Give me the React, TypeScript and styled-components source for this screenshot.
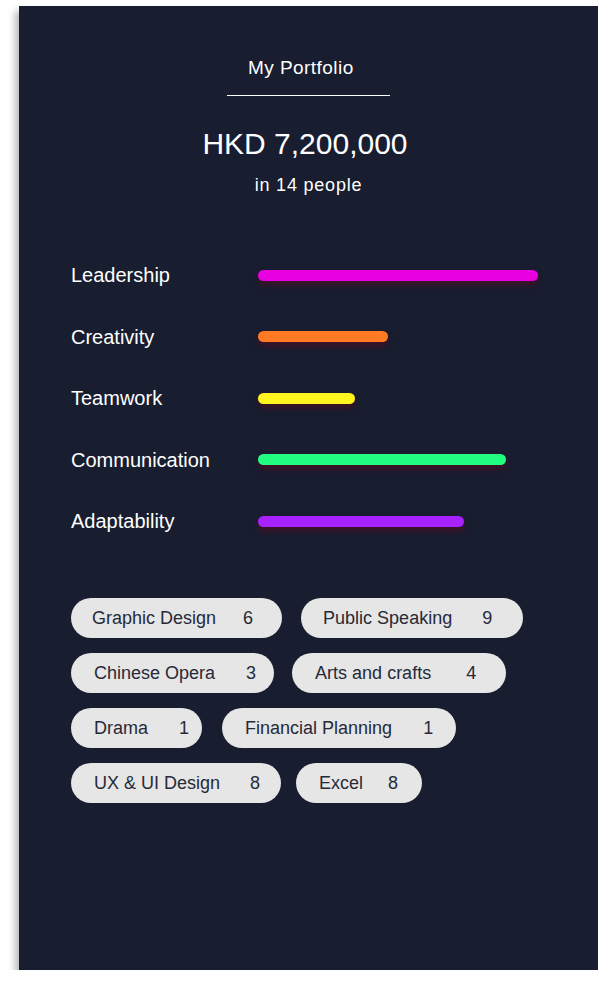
import React from "react";
import styled, { createGlobalStyle } from "styled-components";

const GlobalStyle = createGlobalStyle`
  html, body {
    margin: 0;
    padding: 0;
    background: #ffffff;
    overflow: hidden;
  }
  body {
    font-family: "Liberation Sans", Arial, Helvetica, sans-serif;
  }
`;

const Panel = styled.main`
  box-sizing: border-box;
  margin: 6px 0 0 19px;
  width: 579px;
  height: 964px;
  background: #181d30;
  box-shadow: -4px 5px 7px rgba(0, 0, 0, 0.28);
  padding: 50px 0 0 52px;
  display: flex;
  flex-direction: column;
  color: #ffffff;
`;

const Header = styled.header`
  display: flex;
  flex-direction: column;
  align-items: center;
  margin-left: -52px;
`;

const Title = styled.h1`
  box-sizing: border-box;
  margin: 0;
  width: 163px;
  padding: 0 0 15px 21px;
  border-bottom: 1px solid #ffffff;
  font-size: 19px;
  letter-spacing: 0.45px;
  line-height: 24px;
  font-weight: 400;
  text-align: left;
`;

const Amount = styled.div`
  margin-top: 30px;
  font-size: 30px;
  line-height: 36px;
  margin-right: 7px;
`;

const Sub = styled.div`
  margin-top: 12px;
  font-size: 18px;
  letter-spacing: 0.8px;
  line-height: 22px;
`;

const Skills = styled.section`
  margin-top: 59px;
  display: flex;
  flex-direction: column;
  gap: 21.5px;
`;

const SkillRow = styled.div`
  display: grid;
  grid-template-columns: 187px 1fr;
  align-items: center;
  height: 40px;
`;

const SkillLabel = styled.span`
  font-size: 20px;
  line-height: 24px;
`;

const Bar = styled.div<{ $color: string }>`
  height: 11px;
  border-radius: 6px;
  background: ${(p) => p.$color};
  box-shadow: 0 4px 6px rgba(100, 8, 30, 0.55);
`;

const Tags = styled.section`
  margin-top: 57px;
  display: flex;
  flex-direction: column;
  gap: 15px;
`;

const TagRow = styled.div<{ $gap: number }>`
  display: flex;
  gap: ${(p) => p.$gap}px;
`;

const Pill = styled.div<{ $pl: number; $pr: number; $mid: number }>`
  box-sizing: border-box;
  height: 40px;
  display: flex;
  align-items: center;
  gap: ${(p) => p.$mid}px;
  padding: 0 ${(p) => p.$pr}px 0 ${(p) => p.$pl}px;
  border-radius: 20px;
  background: #e6e6e6;
  color: #262a38;
  font-size: 18px;
  line-height: 22px;
  white-space: nowrap;
`;

const skills = [
  { name: "Leadership", color: "#e800e0", width: 280 },
  { name: "Creativity", color: "#ff7a22", width: 130 },
  { name: "Teamwork", color: "#fff51f", width: 97 },
  { name: "Communication", color: "#22ff80", width: 248 },
  { name: "Adaptability", color: "#a821ff", width: 206 },
];

type Tag = { label: string; n: number; pl: number; pr: number; mid: number };

const tagRows: { gap: number; tags: Tag[] }[] = [
  {
    gap: 19,
    tags: [
      { label: "Graphic Design", n: 6, pl: 21, pr: 29, mid: 27 },
      { label: "Public Speaking", n: 9, pl: 22, pr: 31, mid: 30 },
    ],
  },
  {
    gap: 18,
    tags: [
      { label: "Chinese Opera", n: 3, pl: 23, pr: 18, mid: 31 },
      { label: "Arts and crafts", n: 4, pl: 23, pr: 30, mid: 35 },
    ],
  },
  {
    gap: 20,
    tags: [
      { label: "Drama", n: 1, pl: 23, pr: 13, mid: 31 },
      { label: "Financial Planning", n: 1, pl: 23, pr: 23, mid: 31 },
    ],
  },
  {
    gap: 15,
    tags: [
      { label: "UX & UI Design", n: 8, pl: 23, pr: 21, mid: 30 },
      { label: "Excel", n: 8, pl: 23, pr: 24, mid: 25 },
    ],
  },
];

export default function App() {
  return (
    <>
      <GlobalStyle />
      <Panel>
        <Header>
          <Title>My Portfolio</Title>
          <Amount>HKD 7,200,000</Amount>
          <Sub>in 14 people</Sub>
        </Header>
        <Skills>
          {skills.map((s) => (
            <SkillRow key={s.name}>
              <SkillLabel>{s.name}</SkillLabel>
              <Bar $color={s.color} style={{ width: s.width }} />
            </SkillRow>
          ))}
        </Skills>
        <Tags>
          {tagRows.map((row, i) => (
            <TagRow key={i} $gap={row.gap}>
              {row.tags.map((t) => (
                <Pill key={t.label} $pl={t.pl} $pr={t.pr} $mid={t.mid}>
                  <span>{t.label}</span>
                  <span>{t.n}</span>
                </Pill>
              ))}
            </TagRow>
          ))}
        </Tags>
      </Panel>
    </>
  );
}
